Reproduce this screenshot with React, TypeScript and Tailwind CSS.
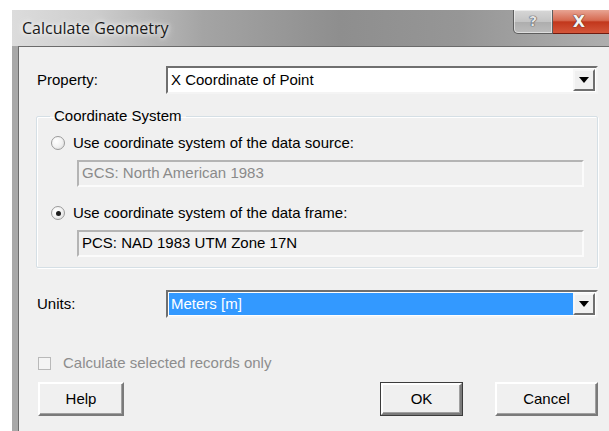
import type { ReactNode } from "react";

const font = "font-['Liberation_Sans',Arial,sans-serif]";

export default function App() {
  return (
    <div className="h-[431px] w-[609px] overflow-hidden bg-white pt-[10px] pl-[12px]">
      <div className="flex h-[440px] w-[597px] flex-col bg-[#a8a8a8]">
        <TitleBar />
        <div className="flex flex-1 pl-[6px]">
          <Client />
        </div>
      </div>
    </div>
  );
}

function TitleBar() {
  return (
    <div className="flex h-[36px] items-start justify-between bg-[linear-gradient(90deg,#dcdcdc_0%,#cdcdcd_14%,#a4a4a4_32%,#8e8e8e_55%,#969696_75%,#aeaeae_100%)]">
      <span className="pt-[6px] pl-[10px] font-['Open_Sans',sans-serif] text-[16px] text-[#1a1a1a] [text-shadow:0_0_8px_#ffffff,0_0_4px_#ffffff]">
        Calculate Geometry
      </span>
      <div className="flex">
        <div className="flex h-[24px] w-[40px] items-center justify-center rounded-bl-[5px] border border-t-0 border-[#5d5d5d] bg-[linear-gradient(180deg,#d7d7d7_0%,#c4c4c4_50%,#adadad_51%,#bcbcbc_100%)] shadow-[inset_0_0_0_1px_rgba(255,255,255,0.5)]">
          <span className="font-['DejaVu_Sans',sans-serif] text-[14px] font-bold text-[#e4e4e4] [text-shadow:0_0_1px_#2a2a3a,0_0_1px_#2a2a3a]">
            ?
          </span>
        </div>
        <div className="flex h-[24px] w-[56px] items-center justify-center border-b border-[#6e1b10] bg-[linear-gradient(180deg,#e8a493_0%,#d66a51_45%,#c2371c_52%,#d4563a_100%)]">
          <span className="pr-[4px] font-['DejaVu_Sans',sans-serif] text-[16px] font-bold text-[#f4f4f4] [text-shadow:0_0_1px_#4a1a10,0_0_1px_#4a1a10]">
            X
          </span>
        </div>
      </div>
    </div>
  );
}

function Client() {
  return (
    <div
      className={`${font} flex-1 border-t border-l border-[#6b6b6b] bg-[#f0f0f0] pt-[19px] pr-[11px] pl-[18px] text-[15px] text-black`}
    >
      <div className="flex items-center">
        <span className="w-[129px] shrink-0">Property:</span>
        <Combo value="X Coordinate of Point" />
      </div>

      <fieldset className="mt-[13px] ml-[-1px] rounded-[2px] border border-[#d5dfe5] px-[14px] pb-[10px] shadow-[inset_1px_1px_0_#ffffff,1px_1px_0_#ffffff]">
        <legend className="ml-[-1px] px-[4px] leading-[18px]">Coordinate System</legend>
        <Radio label="Use coordinate system of the data source:" className="mt-[9px]" />
        <ReadOnlyBox className="text-[#8a8a8a]">GCS: North American 1983</ReadOnlyBox>
        <Radio checked label="Use coordinate system of the data frame:" className="mt-[17px]" />
        <ReadOnlyBox>PCS: NAD 1983 UTM Zone 17N</ReadOnlyBox>
      </fieldset>

      <div className="mt-[22px] flex items-center">
        <span className="w-[129px] shrink-0">Units:</span>
        <Combo value="Meters [m]" selected />
      </div>

      <label className="mt-[36px] flex h-[18px] items-center text-[#8d8d8d]">
        <span className="ml-[1px] h-[13px] w-[13px] border border-[#b9b9b9] bg-[#f4f4f4]" />
        <span className="ml-[12px]">Calculate selected records only</span>
      </label>

      <div className="mt-[10px] flex">
        <Button className="ml-[1px] w-[86px]">Help</Button>
        <div className="flex-1" />
        <Button primary className="w-[83px]">
          OK
        </Button>
        <Button className="ml-[32px] w-[103px]">Cancel</Button>
      </div>
    </div>
  );
}

function Combo({ value, selected }: { value: string; selected?: boolean }) {
  return (
    <div className="flex h-[28px] flex-1 border-2 border-t-[#6f6f6f] border-r-[#f4f4f4] border-b-[#f4f4f4] border-l-[#6f6f6f] bg-white p-px">
      <div
        className={`flex flex-1 items-center pl-[2px] ${selected ? "bg-[#3399ff] text-white" : ""}`}
      >
        {value}
      </div>
      <div className="flex w-[22px] items-center justify-center border-2 border-t-[#f7f7f7] border-r-[#6f6f6f] border-b-[#6f6f6f] border-l-[#f7f7f7] bg-[#f0f0f0]">
        <span className="h-0 w-0 border-t-[6px] border-r-[5px] border-l-[5px] border-t-black border-r-transparent border-l-transparent" />
      </div>
    </div>
  );
}

function Radio({
  label,
  checked,
  className = "",
}: {
  label: string;
  checked?: boolean;
  className?: string;
}) {
  return (
    <div className={`flex h-[18px] items-center ${className}`}>
      <span className="flex h-[14px] w-[14px] items-center justify-center rounded-full border border-[#9a9a9a] bg-[radial-gradient(circle_at_35%_35%,#ffffff_0%,#f2f2f2_50%,#d6d6d6_100%)]">
        {checked && <span className="h-[5px] w-[5px] rounded-full bg-[#1e1e1e]" />}
      </span>
      <span className="ml-[8px]">{label}</span>
    </div>
  );
}

function ReadOnlyBox({ children, className = "" }: { children: ReactNode; className?: string }) {
  return (
    <div
      className={`mt-[8px] ml-[26px] mr-[-1px] flex h-[27px] items-center border-2 border-t-[#b4b4b4] border-r-[#fbfbfb] border-b-[#fbfbfb] border-l-[#b4b4b4] bg-[#f0f0f0] pl-[3px] ${className}`}
    >
      {children}
    </div>
  );
}

function Button({
  children,
  primary,
  className = "",
}: {
  children: ReactNode;
  primary?: boolean;
  className?: string;
}) {
  return (
    <div className={`h-[34px] ${primary ? "border border-[#3c3c3c]" : ""} ${className}`}>
      <div className="flex h-full items-center justify-center border-2 border-t-[#ffffff] border-r-[#7a7a7a] border-b-[#7a7a7a] border-l-[#ffffff] bg-[#f0f0f0] shadow-[inset_-1px_-1px_0_#a0a0a0]">
        {children}
      </div>
    </div>
  );
}
